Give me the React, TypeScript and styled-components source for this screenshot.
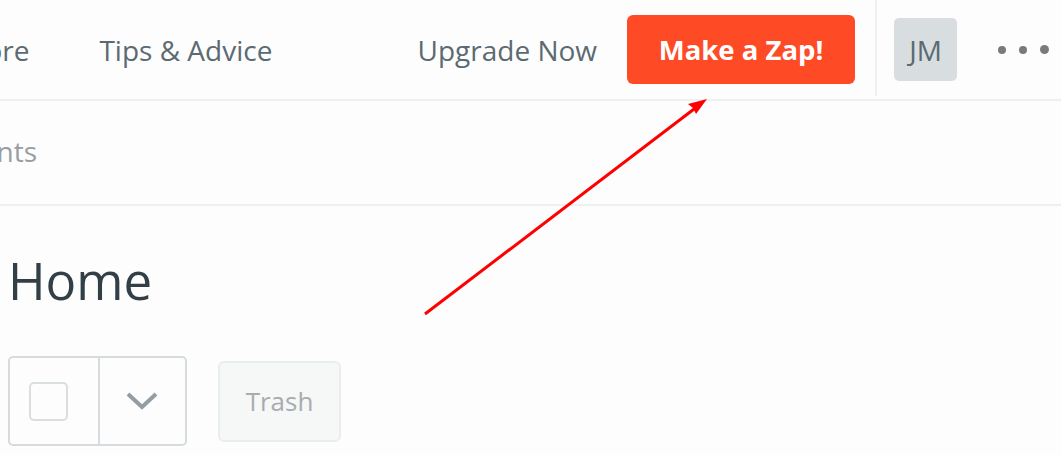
import React from "react";
import styled, { createGlobalStyle } from "styled-components";

const GlobalStyle = createGlobalStyle`
    html, body {
        margin: 0;
        padding: 0;
        background: #fdfdfd;
        font-family: "Open Sans", "Noto Sans", sans-serif;
        overflow: hidden;
    }
`;

const Page = styled.div`
    position: relative;
    width: 1061px;
    height: 455px;
    overflow: hidden;
    background: #fdfdfd;
`;

const TopBar = styled.header`
    display: flex;
    align-items: center;
    height: 99px;
    border-bottom: 2px solid #eef1f1;
`;

const NavGroup = styled.nav`
    display: flex;
    align-items: center;
    gap: 70px;
    flex: 1;
    white-space: nowrap;
`;

const NavLink = styled.span<{ $shift?: number }>`
    font-size: 28px;
    color: #5c6a72;
    margin-left: ${props => props.$shift ? props.$shift + "px" : "0"};
`;

const RightGroup = styled.div`
    display: flex;
    align-items: center;
    height: 100%;
    padding-right: 12px;
`;

const Upgrade = styled.span`
    font-size: 28px;
    color: #5c6a72;
    margin-right: 30px;
    white-space: nowrap;
`;

const ZapButton = styled.button`
    width: 228px;
    height: 69px;
    border: none;
    border-radius: 6px;
    background: #ff4a26;
    color: #ffffff;
    font-family: "Open Sans", sans-serif;
    font-weight: 700;
    font-size: 27.5px;
    padding: 0;
    margin-right: 20px;
`;

const Divider = styled.div`
    align-self: flex-start;
    width: 2px;
    height: 96px;
    background: #eef1f1;
    margin-right: 17px;
`;

const Avatar = styled.div`
    width: 63px;
    height: 63px;
    border-radius: 5px;
    background: #d8dde0;
    color: #5a6a72;
    font-size: 28px;
    display: flex;
    align-items: center;
    justify-content: center;
    margin-right: 41px;
`;

const Dots = styled.div`
    display: flex;
    align-items: center;
    gap: 13px;
`;

const Dot = styled.span<{ $size: number }>`
    width: ${props => props.$size}px;
    height: ${props => props.$size}px;
    border-radius: 50%;
    background: #7a7a7a;
`;

const SubBar = styled.div`
    display: flex;
    align-items: center;
    height: 103px;
    border-bottom: 2px solid #eef1f1;
    white-space: nowrap;
`;

const SubLink = styled.span<{ $shift: number }>`
    font-size: 28px;
    color: #979ea3;
    margin-left: ${props => props.$shift}px;
    margin-top: -3px;
`;

const Main = styled.main`
    padding-left: 8px;
`;

const Heading = styled.h1`
    margin: 42px 0 44px 0;
    font-size: 51px;
    line-height: 64px;
    font-weight: 500;
    color: #333f47;
`;

const Toolbar = styled.div`
    display: flex;
    align-items: center;
    gap: 31px;
`;

const SelectGroup = styled.div`
    display: flex;
    width: 179px;
    height: 90px;
    box-sizing: border-box;
    border: 2px solid #d6dbde;
    border-radius: 5px;
`;

const SelectCell = styled.div<{ $width: number; $divider?: boolean }>`
    width: ${props => props.$width}px;
    display: flex;
    align-items: center;
    justify-content: center;
    border-right: ${props => props.$divider ? "2px solid #d6dbde" : "none"};
`;

const CheckBox = styled.div`
    width: 39px;
    height: 39px;
    box-sizing: border-box;
    border: 2px solid #d9dee1;
    border-radius: 5px;
    margin-right: 10px;
`;

const TrashButton = styled.div`
    width: 123px;
    height: 81px;
    box-sizing: border-box;
    border: 2px solid #eaeded;
    border-radius: 6px;
    background: #f6f7f7;
    color: #a8acae;
    font-size: 26px;
    display: flex;
    align-items: center;
    justify-content: center;
`;

const Annotation = styled.svg`
    position: absolute;
    left: 0;
    top: 0;
    pointer-events: none;
`;

const Chevron = () => (
    <svg width="34" height="20" viewBox="0 0 34 20">
        <path d="M3 3 L17 16 L31 3" fill="none" stroke="#959da2" strokeWidth="4" />
    </svg>
);

export default function App() {
    return (
        <Page>
            <GlobalStyle />
            <TopBar>
                <NavGroup>
                    <NavLink $shift={-69}>Explore</NavLink>
                    <NavLink>Tips &amp; Advice</NavLink>
                </NavGroup>
                <RightGroup>
                    <Upgrade>Upgrade Now</Upgrade>
                    <ZapButton>Make a Zap!</ZapButton>
                    <Divider />
                    <Avatar>JM</Avatar>
                    <Dots>
                        <Dot $size={8} />
                        <Dot $size={8} />
                        <Dot $size={9} />
                    </Dots>
                </RightGroup>
            </TopBar>
            <SubBar>
                <SubLink $shift={-230}>Connected Accounts</SubLink>
            </SubBar>
            <Main>
                <Heading>Home</Heading>
                <Toolbar>
                    <SelectGroup>
                        <SelectCell $width={89} $divider>
                            <CheckBox />
                        </SelectCell>
                        <SelectCell $width={86}>
                            <Chevron />
                        </SelectCell>
                    </SelectGroup>
                    <TrashButton>Trash</TrashButton>
                </Toolbar>
            </Main>
            <Annotation width="1061" height="455" viewBox="0 0 1061 455">
                <line x1="425" y1="314" x2="698" y2="106" stroke="#ff0000" strokeWidth="3" />
                <path d="M707 99 L688 104 L693 108 L696 114 Z" fill="#ff0000" />
            </Annotation>
        </Page>
    );
}
